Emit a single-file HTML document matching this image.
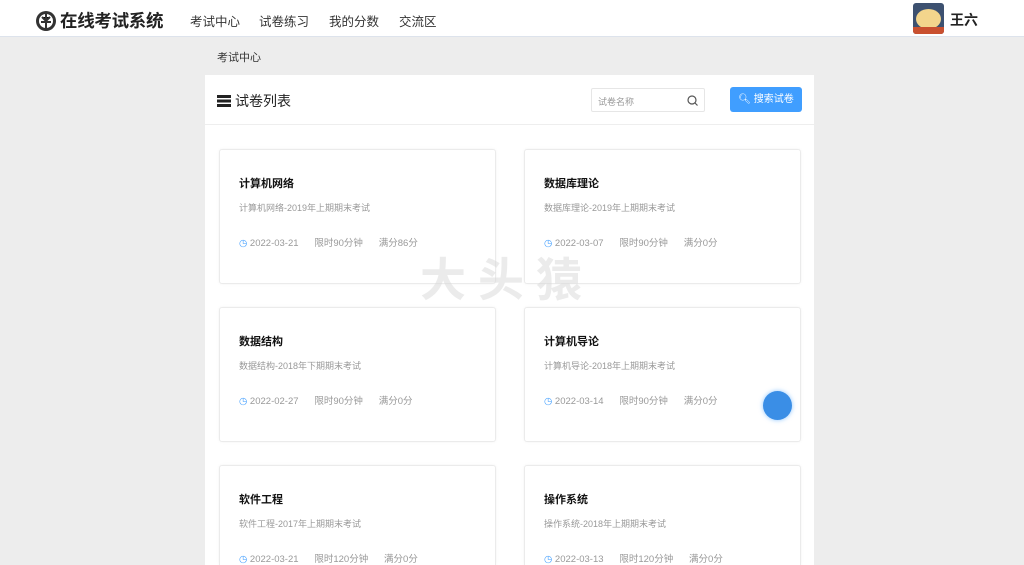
<!DOCTYPE html>
<html><head><meta charset="utf-8"><style>
*{margin:0;padding:0;box-sizing:border-box}
html,body{width:1024px;height:565px;overflow:hidden}
body{background:#ededed;font-family:"Liberation Sans","Noto Sans CJK SC",sans-serif;position:relative}
.hd{position:absolute;left:0;top:0;width:1024px;height:37px;background:#fff;border-bottom:1px solid #dde3ec}
.logo{position:absolute;left:35px;top:8px;font-size:17.5px;font-weight:bold;color:#222;display:flex;align-items:center;gap:3px;letter-spacing:-0.3px}
.nav{position:absolute;top:11px;font-size:12.5px;color:#333}
.av{position:absolute;left:913px;top:3px;width:31px;height:31px;border-radius:3px;background:#3d5170;overflow:hidden}
.name{position:absolute;left:950px;top:10px;font-size:14px;font-weight:bold;color:#222}
.bc{position:absolute;left:217px;top:49px;font-size:11px;color:#333}
.panel{position:absolute;left:205px;top:75px;width:609px;height:490px;background:#fff}
.ptitle{position:absolute;left:12px;top:16px;font-size:14px;color:#222;display:flex;align-items:center;gap:4px}
.line{position:absolute;left:0;top:49px;width:609px;height:1px;background:#eee}
.inp{position:absolute;left:386px;top:13px;width:114px;height:24px;border:1px solid #e6e6e6;border-radius:2px;font-size:9px;color:#999;padding:6px 6px}
.btn{position:absolute;left:525px;top:12px;width:72px;height:25px;background:#409eff;border-radius:3px;color:#fff;font-size:10px;text-align:center;line-height:25px}
.card{position:absolute;width:277px;height:135px;background:#fff;border:1px solid #ebebeb;border-radius:3px;box-shadow:0 0 3px rgba(0,0,0,.05)}
.card.last{height:100px;border-bottom:none;border-radius:3px 3px 0 0}
.card h3{position:absolute;left:19px;top:25px;font-size:11px;font-weight:bold;color:#111}
.card .d{position:absolute;left:19px;top:51px;font-size:9px;color:#999}
.card .m{position:absolute;left:19px;top:85px;font-size:9.5px;color:#999;white-space:nowrap}
.card .m b{font-weight:normal;color:#409eff}
.wm{position:absolute;left:420px;top:244px;font-size:46px;font-weight:bold;color:rgba(215,215,215,.5);letter-spacing:12px}
.fab{position:absolute;left:763px;top:391px;width:29px;height:29px;border-radius:50%;background:#3a8ee6;box-shadow:0 0 5px rgba(64,158,255,.6)}
</style></head><body>
<div class="hd">
<div class="logo"><svg width="22" height="22" viewBox="0 0 22 22"><circle cx="11" cy="11" r="10" fill="#333"/><circle cx="11" cy="11" r="7" fill="#fff"/><path d="M11 4v14M7 7l4 4 4-4M6 12h10" stroke="#333" stroke-width="2"/></svg>在线考试系统</div>
<div class="nav" style="left:190px">考试中心</div>
<div class="nav" style="left:259px">试卷练习</div>
<div class="nav" style="left:329px">我的分数</div>
<div class="nav" style="left:399px">交流区</div>
<div class="av"><div style="position:absolute;left:3px;top:6px;width:25px;height:20px;border-radius:50%;background:#f3d58c"></div><div style="position:absolute;left:0;top:24px;width:31px;height:8px;background:#c9502f"></div></div>
<div class="name">王六</div>
</div>
<div class="bc">考试中心</div>
<div class="panel">
<div class="ptitle"><svg width="14" height="12" viewBox="0 0 14 12"><rect x="0" y="0" width="14" height="3" fill="#222"/><rect x="0" y="4.5" width="14" height="3" fill="#222"/><rect x="0" y="9" width="14" height="3" fill="#222"/></svg>试卷列表</div>
<div class="inp">试卷名称<svg style="position:absolute;right:6px;top:6px" width="11" height="11" viewBox="0 0 11 11"><circle cx="5" cy="5" r="4" fill="none" stroke="#555" stroke-width="1.2"/><path d="M8 8l2.5 2.5" stroke="#555" stroke-width="1.2"/></svg></div>
<div class="btn">🔍︎ 搜索试卷</div>
<div class="line"></div>
</div>
<div class="card" style="left:219px;top:149px"><h3>计算机网络</h3><div class="d">计算机网络-2019年上期期末考试</div><div class="m"><b>◷</b> 2022-03-21 &nbsp;&nbsp;&nbsp;&nbsp; 限时90分钟 &nbsp;&nbsp;&nbsp;&nbsp; 满分86分</div></div>
<div class="card" style="left:524px;top:149px"><h3>数据库理论</h3><div class="d">数据库理论-2019年上期期末考试</div><div class="m"><b>◷</b> 2022-03-07 &nbsp;&nbsp;&nbsp;&nbsp; 限时90分钟 &nbsp;&nbsp;&nbsp;&nbsp; 满分0分</div></div>
<div class="card" style="left:219px;top:307px"><h3>数据结构</h3><div class="d">数据结构-2018年下期期末考试</div><div class="m"><b>◷</b> 2022-02-27 &nbsp;&nbsp;&nbsp;&nbsp; 限时90分钟 &nbsp;&nbsp;&nbsp;&nbsp; 满分0分</div></div>
<div class="card" style="left:524px;top:307px"><h3>计算机导论</h3><div class="d">计算机导论-2018年上期期末考试</div><div class="m"><b>◷</b> 2022-03-14 &nbsp;&nbsp;&nbsp;&nbsp; 限时90分钟 &nbsp;&nbsp;&nbsp;&nbsp; 满分0分</div></div>
<div class="card last" style="left:219px;top:465px"><h3>软件工程</h3><div class="d">软件工程-2017年上期期末考试</div><div class="m"><b>◷</b> 2022-03-21 &nbsp;&nbsp;&nbsp;&nbsp; 限时120分钟 &nbsp;&nbsp;&nbsp;&nbsp; 满分0分</div></div>
<div class="card last" style="left:524px;top:465px"><h3>操作系统</h3><div class="d">操作系统-2018年上期期末考试</div><div class="m"><b>◷</b> 2022-03-13 &nbsp;&nbsp;&nbsp;&nbsp; 限时120分钟 &nbsp;&nbsp;&nbsp;&nbsp; 满分0分</div></div>
<div class="wm">大头猿</div>
<div class="fab"></div>
</body></html>
